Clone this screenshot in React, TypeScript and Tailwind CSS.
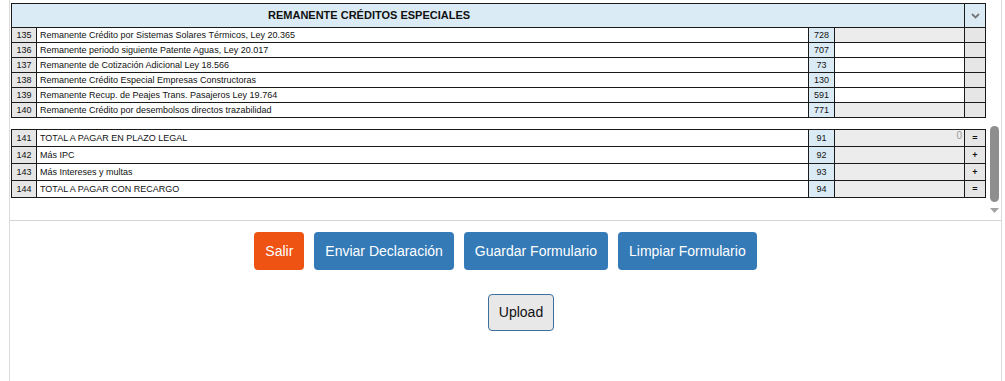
import React from "react";

const remanentes = [
  { n: "135", label: "Remanente Crédito por Sistemas Solares Térmicos, Ley 20.365", code: "728", shaded: true },
  { n: "136", label: "Remanente periodo siguiente Patente Aguas, Ley 20.017", code: "707", shaded: false },
  { n: "137", label: "Remanente de Cotización Adicional Ley 18.566", code: "73", shaded: false },
  { n: "138", label: "Remanente Crédito Especial Empresas Constructoras", code: "130", shaded: false },
  { n: "139", label: "Remanente Recup. de Peajes Trans. Pasajeros Ley 19.764", code: "591", shaded: false },
  { n: "140", label: "Remanente Crédito por desembolsos directos trazabilidad", code: "771", shaded: true },
];

const totales = [
  { n: "141", label: "TOTAL A PAGAR EN PLAZO LEGAL", code: "91", value: "0", op: "=" },
  { n: "142", label: "Más IPC", code: "92", value: "", op: "+" },
  { n: "143", label: "Más Intereses y multas", code: "93", value: "", op: "+" },
  { n: "144", label: "TOTAL A PAGAR CON RECARGO", code: "94", value: "", op: "=" },
];

const cols = "grid grid-cols-[25px_772px_26px_130px_20px]";

function Row({ n, label, code, value, op, shaded, tall }: {
  n: string; label: string; code: string; value?: string; op?: string; shaded: boolean; tall?: boolean;
}) {
  const h = tall ? "h-[17px] leading-[16px]" : "h-[15px] leading-[14px]";
  return (
    <div className={`${cols} ${h} border-b border-[#1a1a1a] text-[9px] text-[#111]`}>
      <div className="bg-[#e6e6e6] border-r border-[#1a1a1a] text-center">{n}</div>
      <div className="border-r border-[#1a1a1a] pl-[3px] truncate">{label}</div>
      <div className="bg-[#dbebf6] border-r border-[#1a1a1a] text-center">{code}</div>
      <div className={`${shaded ? "bg-[#ececec]" : "bg-white"} border-r border-[#1a1a1a] pr-[2px] text-right text-[#9a9a9a] text-[10px] leading-[12px]`}>
        {value}
      </div>
      <div className="bg-[#e6e6e6] text-center font-bold">{op}</div>
    </div>
  );
}

function Btn({ children, color }: { children: React.ReactNode; color: string }) {
  return (
    <button className={`${color} h-[38px] px-[11px] rounded-[4px] text-white text-[14px]`}>
      {children}
    </button>
  );
}

export default function App() {
  return (
    <div className="bg-white min-h-[381px]" style={{ fontFamily: '"Liberation Sans", Arial, sans-serif' }}>
      <div className="ml-[9px] w-[993px] min-h-[381px] border-x border-[#dcdcdc]">
        <div className="flex h-[221px] border-b border-[#d4d4d4]">
          <div className="pl-px pt-[3px]">
            <div className="w-[975px] border-t border-x border-[#1a1a1a]">
              <div className="grid grid-cols-[953px_20px] h-[24px] border-b border-[#1a1a1a] bg-[#daebf5]">
                <div className="border-r border-[#1a1a1a] pl-[256px] text-[11px] font-bold leading-[23px] text-[#111]">
                  REMANENTE CRÉDITOS ESPECIALES
                </div>
                <div className="flex items-center justify-center">
                  <svg width="9" height="6" viewBox="0 0 9 6">
                    <polyline points="1,1 4.5,4.5 8,1" fill="none" stroke="#777" strokeWidth="1.8" />
                  </svg>
                </div>
              </div>
              {remanentes.map((r) => (
                <Row key={r.n} {...r} />
              ))}
            </div>
            <div className="mt-[11px] w-[975px] border-t border-x border-[#1a1a1a]">
              {totales.map((r) => (
                <Row key={r.n} {...r} shaded tall />
              ))}
            </div>
          </div>
          <div className="ml-px w-[15px] flex flex-col items-center">
            <div className="h-[126px]" />
            <div className="w-[9px] h-[76px] rounded-full bg-[#8e8e8e]" />
            <div className="mt-[6px]">
              <svg width="9" height="5" viewBox="0 0 9 5">
                <polygon points="0,0 9,0 4.5,5" fill="#a3a3a3" />
              </svg>
            </div>
          </div>
        </div>
        <div className="pt-[11px] flex justify-center gap-[10px]">
          <Btn color="bg-[#ee5314]">Salir</Btn>
          <Btn color="bg-[#337ab7]">Enviar Declaración</Btn>
          <Btn color="bg-[#337ab7]">Guardar Formulario</Btn>
          <Btn color="bg-[#337ab7]">Limpiar Formulario</Btn>
        </div>
        <div className="mt-[24px] flex justify-center pl-[31px]">
          <button className="h-[37px] w-[66px] rounded-[4px] border border-[#3e6f9c] bg-[#e8e8e8] text-[14px] text-[#111]">
            Upload
          </button>
        </div>
      </div>
    </div>
  );
}
